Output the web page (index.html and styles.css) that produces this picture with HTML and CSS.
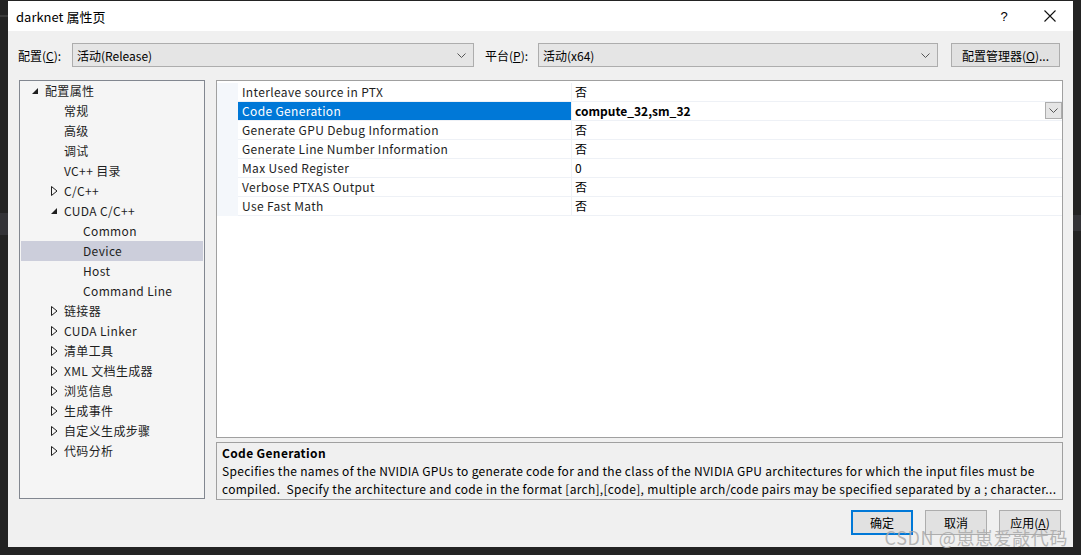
FILE: index.html
```html
<!DOCTYPE html>
<html lang="zh-CN">
<head>
    <meta charset="UTF-8">
    <title>darknet 属性页</title>
    <link rel="stylesheet" href="styles.css">
</head>
<body>
<div class="desktop">
    <div class="edge">
        <div class="edge-line"></div>
        <div class="edge-box"></div>
    </div>

    <div class="window">
        <div class="titlebar">
            <span class="title">darknet 属性页</span>
            <span class="tb-btn">?</span>
            <span class="tb-btn">
                <svg width="12" height="12" viewBox="0 0 12 12"><path d="M0.5 0.5 L11.5 11.5 M11.5 0.5 L0.5 11.5" stroke="#111" stroke-width="1.1" fill="none"/></svg>
            </span>
        </div>

        <div class="toolbar">
            <span class="label">配置(<u>C</u>):</span>
            <div class="combo combo-config">
                <span>活动(Release)</span>
                <svg class="chev" width="9" height="5" viewBox="0 0 9 5"><path d="M0.5 0.5 L4.5 4.5 L8.5 0.5" stroke="#555" fill="none"/></svg>
            </div>
            <span class="label label-platform">平台(<u>P</u>):</span>
            <div class="combo combo-platform">
                <span>活动(x64)</span>
                <svg class="chev" width="9" height="5" viewBox="0 0 9 5"><path d="M0.5 0.5 L4.5 4.5 L8.5 0.5" stroke="#555" fill="none"/></svg>
            </div>
            <button class="btn btn-manager">配置管理器(<u>O</u>)...</button>
        </div>

        <div class="main">
            <div class="tree">
                <div class="node lv0"><span class="exp"><svg width="6" height="6" viewBox="0 0 6 6"><path d="M6 0 L6 6 L0 6 Z" fill="#1e1e1e"/></svg></span>配置属性</div>
                <div class="node lv1"><span class="exp"></span>常规</div>
                <div class="node lv1"><span class="exp"></span>高级</div>
                <div class="node lv1"><span class="exp"></span>调试</div>
                <div class="node lv1"><span class="exp"></span>VC++ 目录</div>
                <div class="node lv1"><span class="exp"><svg width="7" height="10" viewBox="0 0 7 10"><path d="M0.5 0.5 L6 5 L0.5 9.5 Z" stroke="#1e1e1e" fill="none"/></svg></span>C/C++</div>
                <div class="node lv1"><span class="exp"><svg width="6" height="6" viewBox="0 0 6 6"><path d="M6 0 L6 6 L0 6 Z" fill="#1e1e1e"/></svg></span>CUDA C/C++</div>
                <div class="node lv2"><span class="exp"></span>Common</div>
                <div class="node lv2 selected"><span class="exp"></span>Device</div>
                <div class="node lv2"><span class="exp"></span>Host</div>
                <div class="node lv2"><span class="exp"></span>Command Line</div>
                <div class="node lv1"><span class="exp"><svg width="7" height="10" viewBox="0 0 7 10"><path d="M0.5 0.5 L6 5 L0.5 9.5 Z" stroke="#1e1e1e" fill="none"/></svg></span>链接器</div>
                <div class="node lv1"><span class="exp"><svg width="7" height="10" viewBox="0 0 7 10"><path d="M0.5 0.5 L6 5 L0.5 9.5 Z" stroke="#1e1e1e" fill="none"/></svg></span>CUDA Linker</div>
                <div class="node lv1"><span class="exp"><svg width="7" height="10" viewBox="0 0 7 10"><path d="M0.5 0.5 L6 5 L0.5 9.5 Z" stroke="#1e1e1e" fill="none"/></svg></span>清单工具</div>
                <div class="node lv1"><span class="exp"><svg width="7" height="10" viewBox="0 0 7 10"><path d="M0.5 0.5 L6 5 L0.5 9.5 Z" stroke="#1e1e1e" fill="none"/></svg></span>XML 文档生成器</div>
                <div class="node lv1"><span class="exp"><svg width="7" height="10" viewBox="0 0 7 10"><path d="M0.5 0.5 L6 5 L0.5 9.5 Z" stroke="#1e1e1e" fill="none"/></svg></span>浏览信息</div>
                <div class="node lv1"><span class="exp"><svg width="7" height="10" viewBox="0 0 7 10"><path d="M0.5 0.5 L6 5 L0.5 9.5 Z" stroke="#1e1e1e" fill="none"/></svg></span>生成事件</div>
                <div class="node lv1"><span class="exp"><svg width="7" height="10" viewBox="0 0 7 10"><path d="M0.5 0.5 L6 5 L0.5 9.5 Z" stroke="#1e1e1e" fill="none"/></svg></span>自定义生成步骤</div>
                <div class="node lv1"><span class="exp"><svg width="7" height="10" viewBox="0 0 7 10"><path d="M0.5 0.5 L6 5 L0.5 9.5 Z" stroke="#1e1e1e" fill="none"/></svg></span>代码分析</div>
            </div>

            <div class="right">
                <div class="grid">
                    <div class="props">
                        <div class="stripe"></div>
                        <div class="rows">
                            <div class="row"><div class="name">Interleave source in PTX</div><div class="value">否</div></div>
                            <div class="row active">
                                <div class="name">Code Generation</div>
                                <div class="value bold">compute_32,sm_32
                                    <span class="drop"><svg width="9" height="5" viewBox="0 0 9 5"><path d="M0.5 0.5 L4.5 4.5 L8.5 0.5" stroke="#555" fill="none"/></svg></span>
                                </div>
                            </div>
                            <div class="row"><div class="name">Generate GPU Debug Information</div><div class="value">否</div></div>
                            <div class="row"><div class="name">Generate Line Number Information</div><div class="value">否</div></div>
                            <div class="row"><div class="name">Max Used Register</div><div class="value">0</div></div>
                            <div class="row"><div class="name">Verbose PTXAS Output</div><div class="value">否</div></div>
                            <div class="row"><div class="name">Use Fast Math</div><div class="value">否</div></div>
                        </div>
                    </div>
                </div>
                <div class="desc">
                    <div class="desc-title">Code Generation</div>
                    <div class="desc-line">Specifies the names of the NVIDIA GPUs to generate code for and the class of the NVIDIA GPU architectures for which the input files must be</div>
                    <div class="desc-line">compiled.&nbsp; Specify the architecture and code in the format [arch],[code], multiple arch/code pairs may be specified separated by a ; character...</div>
                </div>
            </div>
        </div>

        <div class="actions">
            <button class="btn btn-action default">确定</button>
            <button class="btn btn-action">取消</button>
            <button class="btn btn-action">应用(<u>A</u>)</button>
        </div>

        <div class="watermark">CSDN @崽崽爱敲代码</div>
    </div>

    <div class="edge">
        <div class="edge-gap"></div>
        <div class="edge-box right-box"></div>
    </div>
</div>
</body>
</html>
```

FILE: styles.css
```css
* {
    box-sizing: border-box;
}
body {
    margin: 0;
    background: #232323;
    font-family: "Noto Sans CJK SC", "Microsoft YaHei", sans-serif;
    font-size: 12px;
    letter-spacing: 0.35px;
    color: #1e1e1e;
}
.desktop {
    display: flex;
    width: 1081px;
    height: 555px;
}
.edge {
    width: 8px;
    background: #232323;
    display: flex;
    flex-direction: column;
}
.edge-line {
    height: 2px;
    margin-top: 15px;
    background: #3a3a3a;
}
.edge-box {
    height: 22px;
    margin-top: 196px;
    background: #333337;
}
.edge-gap {
    height: 1px;
}
.right-box {
    margin-top: 214px;
    height: 16px;
}
.window {
    position: relative;
    width: 1065px;
    height: 546px;
    margin-top: 1px;
    background: #f0f0f0;
    display: flex;
    flex-direction: column;
}

/* title bar */
.titlebar {
    height: 30px;
    background: #fff;
    display: flex;
    align-items: center;
    padding-left: 8px;
    font-size: 13px;
    letter-spacing: 0;
    color: #000;
}
.title {
    flex: 1;
}
.tb-btn {
    width: 46px;
    height: 30px;
    display: flex;
    align-items: center;
    justify-content: center;
    font-size: 13px;
    font-family: "Liberation Sans", sans-serif;
}

/* configuration row */
.toolbar {
    display: flex;
    align-items: center;
    height: 24px;
    margin-top: 12px;
    padding-left: 10px;
    letter-spacing: 0;
}
.label {
    width: 54px;
    color: #000;
}
.label-platform {
    margin-left: 11px;
    width: 53px;
}
.combo {
    height: 24px;
    background: #e5e5e5;
    border: 1px solid #adadad;
    display: flex;
    align-items: center;
    justify-content: space-between;
    padding: 0 7px 0 4px;
    color: #000;
}
.combo-config {
    width: 402px;
}
.combo-platform {
    width: 400px;
}
.btn {
    font-family: inherit;
    font-size: 12px;
    letter-spacing: 0;
    background: #e1e1e1;
    border: 1px solid #adadad;
    color: #000;
    padding: 0;
    height: 24px;
}
.btn-manager {
    width: 109px;
    margin-left: 13px;
}

/* main area */
.main {
    display: flex;
    gap: 11px;
    margin: 13px 0 0 11px;
    height: 420px;
}
.tree {
    width: 186px;
    height: 419px;
    background: #f5f5f5;
    border: 1px solid #828790;
    padding: 0 1px;
}
.node {
    height: 20px;
    display: flex;
    align-items: center;
    white-space: nowrap;
    padding-bottom: 1px;
}
.exp {
    width: 21px;
    height: 20px;
    display: flex;
    align-items: center;
    padding-left: 8px;
}
.lv0 {
    padding-left: 3px;
}
.lv1 {
    padding-left: 22px;
}
.lv2 {
    padding-left: 41px;
}
.selected {
    background: #cccedb;
}

.right {
    width: 847px;
    display: flex;
    flex-direction: column;
    gap: 4px;
}
.grid {
    height: 359px;
    background: #fff;
    border: 1px solid #a0a0a0;
    padding-top: 2px;
}
.props {
    display: flex;
}
.stripe {
    width: 21px;
    background: #f4f7fb;
}
.rows {
    flex: 1;
}
.row {
    display: flex;
    height: 19px;
    border-bottom: 1px solid #eef1f6;
}
.name {
    width: 334px;
    padding-left: 4px;
    line-height: 18px;
    white-space: nowrap;
    border-right: 1px solid #eef1f6;
}
.value {
    flex: 1;
    padding-left: 3px;
    line-height: 18px;
    display: flex;
    justify-content: space-between;
    color: #000;
}
.active .name {
    background: #0078d7;
    color: #fff;
}
.bold {
    font-weight: bold;
    letter-spacing: 0;
}
.drop {
    width: 17px;
    height: 17px;
    background: #e5e5e5;
    border: 1px solid #adadad;
    display: flex;
    align-items: center;
    justify-content: center;
}

.desc {
    height: 58px;
    border: 1px solid #a0a0a0;
    background: #f0f0f0;
    padding: 1px 2px 0 5px;
    line-height: 18px;
    color: #000;
}
.desc-title {
    font-weight: bold;
}
.desc-line {
    white-space: nowrap;
    overflow: hidden;
    letter-spacing: 0.3px;
}

/* dialog buttons */
.actions {
    display: flex;
    justify-content: flex-end;
    gap: 12px;
    margin-top: 10px;
    padding-right: 12px;
}
.btn-action {
    width: 62px;
    height: 25px;
}
.default {
    border: 2px solid #0078d7;
}

.watermark {
    position: absolute;
    right: 5px;
    bottom: 0;
    font-size: 18px;
    line-height: 20px;
    letter-spacing: 0.6px;
    color: rgba(170, 170, 170, 0.85);
    white-space: nowrap;
}
```
